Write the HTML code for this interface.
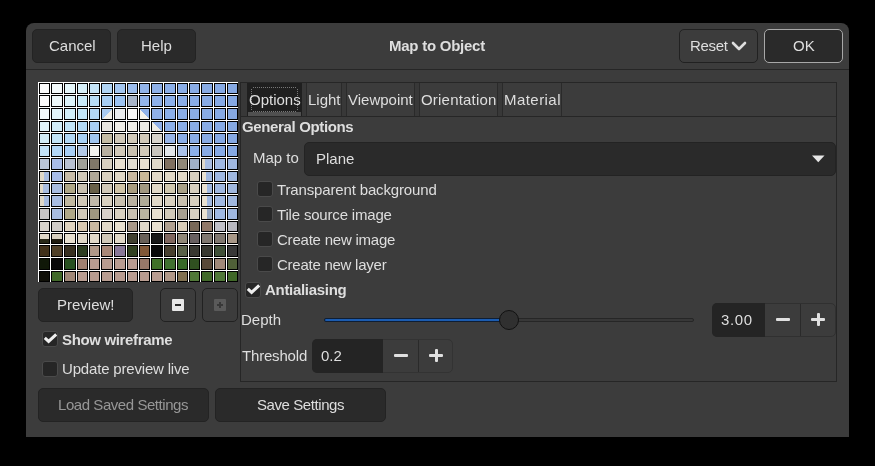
<!DOCTYPE html>
<html><head><meta charset="utf-8">
<style>
*{margin:0;padding:0;box-sizing:border-box}
html,body{width:875px;height:466px;background:#000;overflow:hidden}
body{position:relative;font-family:"Liberation Sans",sans-serif;font-size:15px;color:#dedede}
.a{position:absolute}
.dlg{position:absolute;left:26px;top:23px;width:823px;height:414px;background:#3c3c3c;border-radius:8px 8px 0 0}
.btn{position:absolute;background:#2a2a2a;border:1px solid #232323;border-radius:5px}
.flat{position:absolute;background:#3c3c3c;border:1px solid #212121;border-radius:5px}
.t{position:absolute;white-space:nowrap;line-height:17px;will-change:transform}
.b{font-weight:bold}
#grid{position:absolute;left:38px;top:82px;width:200px;height:200px;background:#fff}
#grid i{position:absolute;border:1px solid #000;display:block}
.cb{position:absolute;width:16px;height:16px;background:#262626;border:1px solid #4a4a4a;border-radius:3px}
.sep{position:absolute;background:#262626}
</style></head><body>
<div class="dlg"></div>
<!-- header -->
<div class="btn" style="left:32px;top:29px;width:79px;height:34px"></div>
<div class="t" style="left:49px;top:37px">Cancel</div>
<div class="btn" style="left:117px;top:29px;width:79px;height:34px"></div>
<div class="t" style="left:141px;top:37px">Help</div>
<div class="t b" style="left:389px;top:37px;letter-spacing:-0.25px">Map to Object</div>
<div class="flat" style="left:679px;top:29px;width:79px;height:34px"></div>
<div class="t" style="left:690px;top:37px;letter-spacing:-0.3px">Reset</div>
<svg class="a" style="left:731px;top:41px" width="16" height="10" viewBox="0 0 16 10"><path d="M2 2 L8 8 L14 2" fill="none" stroke="#dedede" stroke-width="2.6" stroke-linecap="round" stroke-linejoin="round"/></svg>
<div class="btn" style="left:764px;top:29px;width:79px;height:34px;border-color:#a8a8a8"></div>
<div class="t" style="left:793px;top:37px">OK</div>
<div class="sep" style="left:26px;top:69px;width:823px;height:1px"></div>
<!-- grid -->
<div id="grid">
<i style="left:1px;top:1px;width:11px;height:11px;background:#fcfcfc"></i>
<i style="left:13px;top:1px;width:12px;height:11px;background:#f4fbfc"></i>
<i style="left:26px;top:1px;width:12px;height:11px;background:#e6f7fb"></i>
<i style="left:39px;top:1px;width:11px;height:11px;background:#d6eff9"></i>
<i style="left:51px;top:1px;width:11px;height:11px;background:#c4e4f8"></i>
<i style="left:63px;top:1px;width:12px;height:11px;background:#b0d4f4"></i>
<i style="left:76px;top:1px;width:12px;height:11px;background:#a4c6f0"></i>
<i style="left:89px;top:1px;width:11px;height:11px;background:#9cbcec"></i>
<i style="left:101px;top:1px;width:11px;height:11px;background:#92b4ea"></i>
<i style="left:113px;top:1px;width:12px;height:11px;background:#8eb0e8"></i>
<i style="left:126px;top:1px;width:12px;height:11px;background:#8cafe8"></i>
<i style="left:139px;top:1px;width:11px;height:11px;background:#8aade7"></i>
<i style="left:151px;top:1px;width:11px;height:11px;background:#89ace6"></i>
<i style="left:163px;top:1px;width:12px;height:11px;background:#88abe5"></i>
<i style="left:176px;top:1px;width:12px;height:11px;background:#87aae4"></i>
<i style="left:189px;top:1px;width:11px;height:11px;background:#86a9e3"></i>
<i style="left:1px;top:13px;width:11px;height:12px;background:#fcfcfc"></i>
<i style="left:13px;top:13px;width:12px;height:12px;background:#eef9fb"></i>
<i style="left:26px;top:13px;width:12px;height:12px;background:#ddf3fa"></i>
<i style="left:39px;top:13px;width:11px;height:12px;background:#c8e9f8"></i>
<i style="left:51px;top:13px;width:11px;height:12px;background:#b6dcf6"></i>
<i style="left:63px;top:13px;width:12px;height:12px;background:#a8cef3"></i>
<i style="left:76px;top:13px;width:12px;height:12px;background:#9cc2f0"></i>
<i style="left:89px;top:13px;width:11px;height:12px;background:#a8b4c8"></i>
<i style="left:101px;top:13px;width:11px;height:12px;background:#92b4ea"></i>
<i style="left:113px;top:13px;width:12px;height:12px;background:#8eb0e8"></i>
<i style="left:126px;top:13px;width:12px;height:12px;background:#8cafe8"></i>
<i style="left:139px;top:13px;width:11px;height:12px;background:#8aade7"></i>
<i style="left:151px;top:13px;width:11px;height:12px;background:#89ace6"></i>
<i style="left:163px;top:13px;width:12px;height:12px;background:#88abe5"></i>
<i style="left:176px;top:13px;width:12px;height:12px;background:#87aae4"></i>
<i style="left:189px;top:13px;width:11px;height:12px;background:#86a9e3"></i>
<i style="left:1px;top:26px;width:11px;height:12px;background:#f2fafc"></i>
<i style="left:13px;top:26px;width:12px;height:12px;background:#e2f5fb"></i>
<i style="left:26px;top:26px;width:12px;height:12px;background:#d2eef9"></i>
<i style="left:39px;top:26px;width:11px;height:12px;background:#c2e5f8"></i>
<i style="left:51px;top:26px;width:11px;height:12px;background:#b2d8f6"></i>
<i style="left:63px;top:26px;width:12px;height:12px;background:linear-gradient(-45deg,#eeece6 50%,#a8caf0 50%)"></i>
<i style="left:76px;top:26px;width:12px;height:12px;background:#eaecee"></i>
<i style="left:89px;top:26px;width:11px;height:12px;background:#fafafa"></i>
<i style="left:101px;top:26px;width:11px;height:12px;background:linear-gradient(45deg,#f4f2ec 50%,#90b2ea 50%)"></i>
<i style="left:113px;top:26px;width:12px;height:12px;background:#90b0e8"></i>
<i style="left:126px;top:26px;width:12px;height:12px;background:#8cafe8"></i>
<i style="left:139px;top:26px;width:11px;height:12px;background:#8aade7"></i>
<i style="left:151px;top:26px;width:11px;height:12px;background:#89ace6"></i>
<i style="left:163px;top:26px;width:12px;height:12px;background:#88abe5"></i>
<i style="left:176px;top:26px;width:12px;height:12px;background:#87aae4"></i>
<i style="left:189px;top:26px;width:11px;height:12px;background:#86a9e3"></i>
<i style="left:1px;top:39px;width:11px;height:11px;background:#e2f5fb"></i>
<i style="left:13px;top:39px;width:12px;height:11px;background:#d2edf9"></i>
<i style="left:26px;top:39px;width:12px;height:11px;background:#c2e4f8"></i>
<i style="left:39px;top:39px;width:11px;height:11px;background:#b2d9f6"></i>
<i style="left:51px;top:39px;width:11px;height:11px;background:#a8cef4"></i>
<i style="left:63px;top:39px;width:12px;height:11px;background:#e8e6e0"></i>
<i style="left:76px;top:39px;width:12px;height:11px;background:#f0eee8"></i>
<i style="left:89px;top:39px;width:11px;height:11px;background:#f0eee8"></i>
<i style="left:101px;top:39px;width:11px;height:11px;background:#ecebe6"></i>
<i style="left:113px;top:39px;width:12px;height:11px;background:linear-gradient(45deg,#eeece6 50%,#90b0e8 50%)"></i>
<i style="left:126px;top:39px;width:12px;height:11px;background:#8cafe8"></i>
<i style="left:139px;top:39px;width:11px;height:11px;background:#8aade7"></i>
<i style="left:151px;top:39px;width:11px;height:11px;background:#89ace6"></i>
<i style="left:163px;top:39px;width:12px;height:11px;background:#88abe5"></i>
<i style="left:176px;top:39px;width:12px;height:11px;background:#87aae4"></i>
<i style="left:189px;top:39px;width:11px;height:11px;background:#86a9e3"></i>
<i style="left:1px;top:51px;width:11px;height:11px;background:#d2edf8"></i>
<i style="left:13px;top:51px;width:12px;height:11px;background:#c2e4f7"></i>
<i style="left:26px;top:51px;width:12px;height:11px;background:#b2d8f6"></i>
<i style="left:39px;top:51px;width:11px;height:11px;background:#a8d0f4"></i>
<i style="left:51px;top:51px;width:11px;height:11px;background:#a0c6f0"></i>
<i style="left:63px;top:51px;width:12px;height:11px;background:#c4bca4"></i>
<i style="left:76px;top:51px;width:12px;height:11px;background:#d0c8b8"></i>
<i style="left:89px;top:51px;width:11px;height:11px;background:#d0c8b8"></i>
<i style="left:101px;top:51px;width:11px;height:11px;background:#d0c8b8"></i>
<i style="left:113px;top:51px;width:12px;height:11px;background:#d8d4cc"></i>
<i style="left:126px;top:51px;width:12px;height:11px;background:#98b6ea"></i>
<i style="left:139px;top:51px;width:11px;height:11px;background:#8aade7"></i>
<i style="left:151px;top:51px;width:11px;height:11px;background:#89ace6"></i>
<i style="left:163px;top:51px;width:12px;height:11px;background:#88abe5"></i>
<i style="left:176px;top:51px;width:12px;height:11px;background:#87aae4"></i>
<i style="left:189px;top:51px;width:11px;height:11px;background:#86a9e3"></i>
<i style="left:1px;top:63px;width:11px;height:12px;background:#c2e2f8"></i>
<i style="left:13px;top:63px;width:12px;height:12px;background:#b2d6f6"></i>
<i style="left:26px;top:63px;width:12px;height:12px;background:#a8cef4"></i>
<i style="left:39px;top:63px;width:11px;height:12px;background:#b2c8e6"></i>
<i style="left:51px;top:63px;width:11px;height:12px;background:#f2f2ee"></i>
<i style="left:63px;top:63px;width:12px;height:12px;background:#b8b0a0"></i>
<i style="left:76px;top:63px;width:12px;height:12px;background:#d0c8b8"></i>
<i style="left:89px;top:63px;width:11px;height:12px;background:#c8c0b0"></i>
<i style="left:101px;top:63px;width:11px;height:12px;background:#d0c8b8"></i>
<i style="left:113px;top:63px;width:12px;height:12px;background:#c8c4bc"></i>
<i style="left:126px;top:63px;width:12px;height:12px;background:#e0e4e8"></i>
<i style="left:139px;top:63px;width:11px;height:12px;background:#a8c0e8"></i>
<i style="left:151px;top:63px;width:11px;height:12px;background:#8cafe8"></i>
<i style="left:163px;top:63px;width:12px;height:12px;background:#88abe5"></i>
<i style="left:176px;top:63px;width:12px;height:12px;background:#87aae4"></i>
<i style="left:189px;top:63px;width:11px;height:12px;background:#86a9e3"></i>
<i style="left:1px;top:76px;width:11px;height:12px;background:#b8c4d8"></i>
<i style="left:13px;top:76px;width:12px;height:12px;background:#a8bce8"></i>
<i style="left:26px;top:76px;width:12px;height:12px;background:#b8c0d0"></i>
<i style="left:39px;top:76px;width:11px;height:12px;background:#a0a098"></i>
<i style="left:51px;top:76px;width:11px;height:12px;background:#807868"></i>
<i style="left:63px;top:76px;width:12px;height:12px;background:#d8d0c0"></i>
<i style="left:76px;top:76px;width:12px;height:12px;background:#e8e0d0"></i>
<i style="left:89px;top:76px;width:11px;height:12px;background:#e0dcd0"></i>
<i style="left:101px;top:76px;width:11px;height:12px;background:#e8e0d0"></i>
<i style="left:113px;top:76px;width:12px;height:12px;background:#e0d8c8"></i>
<i style="left:126px;top:76px;width:12px;height:12px;background:#807060"></i>
<i style="left:139px;top:76px;width:11px;height:12px;background:#908878"></i>
<i style="left:151px;top:76px;width:11px;height:12px;background:#a0b0c8"></i>
<i style="left:163px;top:76px;width:12px;height:12px;background:linear-gradient(90deg,#e0d8c8 25%,#a8bce0 25%)"></i>
<i style="left:176px;top:76px;width:12px;height:12px;background:#a0b8e0"></i>
<i style="left:189px;top:76px;width:11px;height:12px;background:#a0b8e0"></i>
<i style="left:1px;top:89px;width:11px;height:11px;background:linear-gradient(90deg,#e0d8c8 40%,#a8bce0 40%)"></i>
<i style="left:13px;top:89px;width:12px;height:11px;background:#a8bce8"></i>
<i style="left:26px;top:89px;width:12px;height:11px;background:#c8bca8"></i>
<i style="left:39px;top:89px;width:11px;height:11px;background:#d0c8b8"></i>
<i style="left:51px;top:89px;width:11px;height:11px;background:#b0a898"></i>
<i style="left:63px;top:89px;width:12px;height:11px;background:#d8d0c0"></i>
<i style="left:76px;top:89px;width:12px;height:11px;background:#e0d8c8"></i>
<i style="left:89px;top:89px;width:11px;height:11px;background:#c8b8a0"></i>
<i style="left:101px;top:89px;width:11px;height:11px;background:#c8b898"></i>
<i style="left:113px;top:89px;width:12px;height:11px;background:#e0d8c8"></i>
<i style="left:126px;top:89px;width:12px;height:11px;background:#e0d8c8"></i>
<i style="left:139px;top:89px;width:11px;height:11px;background:#e0d8c8"></i>
<i style="left:151px;top:89px;width:11px;height:11px;background:#d8d0c0"></i>
<i style="left:163px;top:89px;width:12px;height:11px;background:linear-gradient(90deg,#e8e0d0 35%,#a0b8e0 35%)"></i>
<i style="left:176px;top:89px;width:12px;height:11px;background:#a0b8e0"></i>
<i style="left:189px;top:89px;width:11px;height:11px;background:#a0b8e0"></i>
<i style="left:1px;top:101px;width:11px;height:11px;background:linear-gradient(90deg,#e0d8c8 35%,#a8bce0 35%)"></i>
<i style="left:13px;top:101px;width:12px;height:11px;background:#a8bce0"></i>
<i style="left:26px;top:101px;width:12px;height:11px;background:#b0a888"></i>
<i style="left:39px;top:101px;width:11px;height:11px;background:#c8c0b0"></i>
<i style="left:51px;top:101px;width:11px;height:11px;background:#686048"></i>
<i style="left:63px;top:101px;width:12px;height:11px;background:#d0c8b8"></i>
<i style="left:76px;top:101px;width:12px;height:11px;background:#d0c4a8"></i>
<i style="left:89px;top:101px;width:11px;height:11px;background:#a89c80"></i>
<i style="left:101px;top:101px;width:11px;height:11px;background:#a09880"></i>
<i style="left:113px;top:101px;width:12px;height:11px;background:#e0d8c8"></i>
<i style="left:126px;top:101px;width:12px;height:11px;background:#d0c8b0"></i>
<i style="left:139px;top:101px;width:11px;height:11px;background:#a8a088"></i>
<i style="left:151px;top:101px;width:11px;height:11px;background:#d8d0c0"></i>
<i style="left:163px;top:101px;width:12px;height:11px;background:linear-gradient(90deg,#e8e0d0 45%,#a0b8e0 45%)"></i>
<i style="left:176px;top:101px;width:12px;height:11px;background:#a0b8e0"></i>
<i style="left:189px;top:101px;width:11px;height:11px;background:#a0b8e0"></i>
<i style="left:1px;top:113px;width:11px;height:12px;background:linear-gradient(90deg,#e0d8c8 40%,#a8bce0 40%)"></i>
<i style="left:13px;top:113px;width:12px;height:12px;background:#a8bce0"></i>
<i style="left:26px;top:113px;width:12px;height:12px;background:#c0b8a0"></i>
<i style="left:39px;top:113px;width:11px;height:12px;background:#d0c8b8"></i>
<i style="left:51px;top:113px;width:11px;height:12px;background:#c0b8a8"></i>
<i style="left:63px;top:113px;width:12px;height:12px;background:#d8d0c0"></i>
<i style="left:76px;top:113px;width:12px;height:12px;background:#c8c0b0"></i>
<i style="left:89px;top:113px;width:11px;height:12px;background:#b8b0a0"></i>
<i style="left:101px;top:113px;width:11px;height:12px;background:#b0ac98"></i>
<i style="left:113px;top:113px;width:12px;height:12px;background:#e0d8c8"></i>
<i style="left:126px;top:113px;width:12px;height:12px;background:#d8d0c0"></i>
<i style="left:139px;top:113px;width:11px;height:12px;background:#c8c0b0"></i>
<i style="left:151px;top:113px;width:11px;height:12px;background:#d8d0c0"></i>
<i style="left:163px;top:113px;width:12px;height:12px;background:linear-gradient(90deg,#e8e0d0 45%,#a0b8e0 45%)"></i>
<i style="left:176px;top:113px;width:12px;height:12px;background:#a0b8e0"></i>
<i style="left:189px;top:113px;width:11px;height:12px;background:#a0b8e0"></i>
<i style="left:1px;top:126px;width:11px;height:12px;background:#c8c4c4"></i>
<i style="left:13px;top:126px;width:12px;height:12px;background:#a8bce0"></i>
<i style="left:26px;top:126px;width:12px;height:12px;background:#b0a888"></i>
<i style="left:39px;top:126px;width:11px;height:12px;background:#d0c8b8"></i>
<i style="left:51px;top:126px;width:11px;height:12px;background:#a09880"></i>
<i style="left:63px;top:126px;width:12px;height:12px;background:#d8d0c8"></i>
<i style="left:76px;top:126px;width:12px;height:12px;background:#d8d0c0"></i>
<i style="left:89px;top:126px;width:11px;height:12px;background:#c8c0b0"></i>
<i style="left:101px;top:126px;width:11px;height:12px;background:#b8b4a0"></i>
<i style="left:113px;top:126px;width:12px;height:12px;background:#e8e0d0"></i>
<i style="left:126px;top:126px;width:12px;height:12px;background:#d0c8b8"></i>
<i style="left:139px;top:126px;width:11px;height:12px;background:#a8a090"></i>
<i style="left:151px;top:126px;width:11px;height:12px;background:#d8d0c0"></i>
<i style="left:163px;top:126px;width:12px;height:12px;background:linear-gradient(90deg,#e8e0d0 45%,#98a8c0 45%)"></i>
<i style="left:176px;top:126px;width:12px;height:12px;background:#a0b8e0"></i>
<i style="left:189px;top:126px;width:11px;height:12px;background:#a0b8e0"></i>
<i style="left:1px;top:139px;width:11px;height:11px;background:#d8d4cc"></i>
<i style="left:13px;top:139px;width:12px;height:11px;background:#d0ccc8"></i>
<i style="left:26px;top:139px;width:12px;height:11px;background:#e0d4c0"></i>
<i style="left:39px;top:139px;width:11px;height:11px;background:#d8c8b0"></i>
<i style="left:51px;top:139px;width:11px;height:11px;background:#c8b8a0"></i>
<i style="left:63px;top:139px;width:12px;height:11px;background:#e0d8c8"></i>
<i style="left:76px;top:139px;width:12px;height:11px;background:#e8e0d0"></i>
<i style="left:89px;top:139px;width:11px;height:11px;background:#a89888"></i>
<i style="left:101px;top:139px;width:11px;height:11px;background:#e0d8c8"></i>
<i style="left:113px;top:139px;width:12px;height:11px;background:#e8e0d0"></i>
<i style="left:126px;top:139px;width:12px;height:11px;background:#b0a090"></i>
<i style="left:139px;top:139px;width:11px;height:11px;background:#d8ccb8"></i>
<i style="left:151px;top:139px;width:11px;height:11px;background:#786858"></i>
<i style="left:163px;top:139px;width:12px;height:11px;background:#907868"></i>
<i style="left:176px;top:139px;width:12px;height:11px;background:#c0c0c8"></i>
<i style="left:189px;top:139px;width:11px;height:11px;background:#b8b8c0"></i>
<i style="left:1px;top:151px;width:11px;height:11px;background:linear-gradient(#e0d8c8 60%,#282818 60%)"></i>
<i style="left:13px;top:151px;width:12px;height:11px;background:linear-gradient(#d8d0c0 60%,#201c10 60%)"></i>
<i style="left:26px;top:151px;width:12px;height:11px;background:#e8e0d0"></i>
<i style="left:39px;top:151px;width:11px;height:11px;background:#e0d8c8"></i>
<i style="left:51px;top:151px;width:11px;height:11px;background:#e0d8c8"></i>
<i style="left:63px;top:151px;width:12px;height:11px;background:#d0c8b8"></i>
<i style="left:76px;top:151px;width:12px;height:11px;background:#e0d8c8"></i>
<i style="left:89px;top:151px;width:11px;height:11px;background:#404030"></i>
<i style="left:101px;top:151px;width:11px;height:11px;background:#686058"></i>
<i style="left:113px;top:151px;width:12px;height:11px;background:#181818"></i>
<i style="left:126px;top:151px;width:12px;height:11px;background:#806860"></i>
<i style="left:139px;top:151px;width:11px;height:11px;background:#908878"></i>
<i style="left:151px;top:151px;width:11px;height:11px;background:#686060"></i>
<i style="left:163px;top:151px;width:12px;height:11px;background:#807870"></i>
<i style="left:176px;top:151px;width:12px;height:11px;background:#807870"></i>
<i style="left:189px;top:151px;width:11px;height:11px;background:#a89888"></i>
<i style="left:1px;top:163px;width:11px;height:12px;background:#40301a"></i>
<i style="left:13px;top:163px;width:12px;height:12px;background:#504028"></i>
<i style="left:26px;top:163px;width:12px;height:12px;background:#383020"></i>
<i style="left:39px;top:163px;width:11px;height:12px;background:#2c3c20"></i>
<i style="left:51px;top:163px;width:11px;height:12px;background:#b09888"></i>
<i style="left:63px;top:163px;width:12px;height:12px;background:#a88878"></i>
<i style="left:76px;top:163px;width:12px;height:12px;background:#887898"></i>
<i style="left:89px;top:163px;width:11px;height:12px;background:#304020"></i>
<i style="left:101px;top:163px;width:11px;height:12px;background:#805838"></i>
<i style="left:113px;top:163px;width:12px;height:12px;background:#080808"></i>
<i style="left:126px;top:163px;width:12px;height:12px;background:#484030"></i>
<i style="left:139px;top:163px;width:11px;height:12px;background:#586048"></i>
<i style="left:151px;top:163px;width:11px;height:12px;background:#383830"></i>
<i style="left:163px;top:163px;width:12px;height:12px;background:#383830"></i>
<i style="left:176px;top:163px;width:12px;height:12px;background:#405038"></i>
<i style="left:189px;top:163px;width:11px;height:12px;background:#383838"></i>
<i style="left:1px;top:176px;width:11px;height:12px;background:#101808"></i>
<i style="left:13px;top:176px;width:12px;height:12px;background:#080808"></i>
<i style="left:26px;top:176px;width:12px;height:12px;background:#285020"></i>
<i style="left:39px;top:176px;width:11px;height:12px;background:#a08070"></i>
<i style="left:51px;top:176px;width:11px;height:12px;background:#b89c90"></i>
<i style="left:63px;top:176px;width:12px;height:12px;background:#b89c90"></i>
<i style="left:76px;top:176px;width:12px;height:12px;background:#b89c90"></i>
<i style="left:89px;top:176px;width:11px;height:12px;background:#b89c90"></i>
<i style="left:101px;top:176px;width:11px;height:12px;background:#987868"></i>
<i style="left:113px;top:176px;width:12px;height:12px;background:#407028"></i>
<i style="left:126px;top:176px;width:12px;height:12px;background:#407030"></i>
<i style="left:139px;top:176px;width:11px;height:12px;background:#386828"></i>
<i style="left:151px;top:176px;width:11px;height:12px;background:#305020"></i>
<i style="left:163px;top:176px;width:12px;height:12px;background:#584838"></i>
<i style="left:176px;top:176px;width:12px;height:12px;background:#a08878"></i>
<i style="left:189px;top:176px;width:11px;height:12px;background:#506038"></i>
<i style="left:1px;top:189px;width:11px;height:11px;background:#101008"></i>
<i style="left:13px;top:189px;width:12px;height:11px;background:#406828"></i>
<i style="left:26px;top:189px;width:12px;height:11px;background:#a08878"></i>
<i style="left:39px;top:189px;width:11px;height:11px;background:#b89c90"></i>
<i style="left:51px;top:189px;width:11px;height:11px;background:#b89c90"></i>
<i style="left:63px;top:189px;width:12px;height:11px;background:#b89c90"></i>
<i style="left:76px;top:189px;width:12px;height:11px;background:#b89c90"></i>
<i style="left:89px;top:189px;width:11px;height:11px;background:#b89c90"></i>
<i style="left:101px;top:189px;width:11px;height:11px;background:#b89c90"></i>
<i style="left:113px;top:189px;width:12px;height:11px;background:#b89c90"></i>
<i style="left:126px;top:189px;width:12px;height:11px;background:#b09888"></i>
<i style="left:139px;top:189px;width:11px;height:11px;background:#807050"></i>
<i style="left:151px;top:189px;width:11px;height:11px;background:#507838"></i>
<i style="left:163px;top:189px;width:12px;height:11px;background:#406828"></i>
<i style="left:176px;top:189px;width:12px;height:11px;background:#507838"></i>
<i style="left:189px;top:189px;width:11px;height:11px;background:#406828"></i></div>
<div class="btn" style="left:38px;top:288px;width:95px;height:34px"></div>
<div class="t" style="left:57px;top:296px">Preview!</div>
<div class="flat" style="left:160px;top:288px;width:36px;height:34px"></div>
<div class="a" style="left:172px;top:299px;width:12px;height:12px;background:#e8e8e8;border-radius:1px"></div>
<div class="a" style="left:175px;top:304px;width:6px;height:2px;background:#2a2a2a"></div>
<div class="flat" style="left:202px;top:288px;width:36px;height:34px"></div>
<div class="a" style="left:214px;top:299px;width:12px;height:12px;background:#5a5a5a;border-radius:1px"></div>
<div class="a" style="left:217px;top:304px;width:6px;height:2px;background:#383838"></div>
<div class="a" style="left:219px;top:302px;width:2px;height:6px;background:#383838"></div>

<div class="cb" style="left:42px;top:331px"></div>
<svg class="a" style="left:42px;top:331px" width="15" height="15" viewBox="0 0 15 15"><path d="M2.8 6.9 L6.6 10.4 L14.2 3.4" fill="none" stroke="#eeeeee" stroke-width="3" stroke-linecap="butt" stroke-linejoin="miter"/></svg>
<div class="t b" style="left:62px;top:331px;letter-spacing:-0.35px">Show wireframe</div>
<div class="cb" style="left:42px;top:361px"></div>
<div class="t" style="left:62px;top:360px;letter-spacing:-0.18px">Update preview live</div>

<div class="btn" style="left:38px;top:388px;width:171px;height:34px"></div>
<div class="t" style="left:58px;top:396px;color:#979797;letter-spacing:-0.44px">Load Saved Settings</div>
<div class="btn" style="left:215px;top:388px;width:171px;height:34px"></div>
<div class="t" style="left:257px;top:396px;letter-spacing:-0.42px">Save Settings</div>

<!-- notebook frame -->
<div class="a" style="left:240px;top:82px;width:597px;height:300px;border:1px solid #262626"></div>
<div class="a" style="left:241px;top:83px;width:595px;height:33px;background:#383838"></div>
<div class="sep" style="left:241px;top:116px;width:595px;height:1px"></div>
<!-- tabs -->
<div class="a" style="left:247px;top:83px;width:55px;height:33px;background:#1f1f1f"></div>
<div class="a" style="left:248px;top:112px;width:53px;height:4px;background:#505050"></div>
<div class="a" style="left:253px;top:87px;width:43px;height:1px;background:repeating-linear-gradient(90deg,#787878 0 1px,transparent 1px 2px)"></div><div class="a" style="left:253px;top:111px;width:43px;height:1px;background:repeating-linear-gradient(90deg,#787878 0 1px,transparent 1px 2px)"></div><div class="a" style="left:251px;top:89px;width:1px;height:21px;background:repeating-linear-gradient(180deg,#787878 0 1px,transparent 1px 2px)"></div><div class="a" style="left:297px;top:89px;width:1px;height:21px;background:repeating-linear-gradient(180deg,#787878 0 1px,transparent 1px 2px)"></div>
<div class="t" style="left:249px;top:91px">Options</div>
<div class="a" style="left:306px;top:83px;width:36px;height:33px;background:#3c3c3c;border-left:1px solid #2a2a2a;border-right:1px solid #2a2a2a"></div>
<div class="t" style="left:308px;top:91px">Light</div>
<div class="a" style="left:346px;top:83px;width:69px;height:33px;background:#3c3c3c;border-left:1px solid #2a2a2a;border-right:1px solid #2a2a2a"></div>
<div class="t" style="left:348px;top:91px">Viewpoint</div>
<div class="a" style="left:419px;top:83px;width:79px;height:33px;background:#3c3c3c;border-left:1px solid #2a2a2a;border-right:1px solid #2a2a2a"></div>
<div class="t" style="left:421px;top:91px;letter-spacing:0.2px">Orientation</div>
<div class="a" style="left:502px;top:83px;width:60px;height:33px;background:#3c3c3c;border-left:1px solid #2a2a2a;border-right:1px solid #2a2a2a"></div>
<div class="t" style="left:504px;top:91px;letter-spacing:0.45px">Material</div>
<div class="a" style="left:562px;top:83px;width:274px;height:33px;background:#3c3c3c"></div>

<div class="t b" style="left:242px;top:118px;letter-spacing:-0.36px">General Options</div>
<div class="t" style="left:253px;top:149px">Map to</div>
<div class="btn" style="left:304px;top:142px;width:532px;height:34px"></div>
<div class="t" style="left:316px;top:150px">Plane</div>
<svg class="a" style="left:812px;top:155px" width="13" height="8" viewBox="0 0 13 8"><path d="M0 0.5 L12.5 0.5 L6.25 7.2 Z" fill="#e6e6e6"/></svg>

<div class="cb" style="left:257px;top:181px"></div>
<div class="t" style="left:277px;top:181px;letter-spacing:-0.15px">Transparent background</div>
<div class="cb" style="left:257px;top:206px"></div>
<div class="t" style="left:277px;top:206px;letter-spacing:-0.18px">Tile source image</div>
<div class="cb" style="left:257px;top:231px"></div>
<div class="t" style="left:277px;top:231px;letter-spacing:-0.22px">Create new image</div>
<div class="cb" style="left:257px;top:256px"></div>
<div class="t" style="left:277px;top:256px;letter-spacing:-0.25px">Create new layer</div>
<div class="cb" style="left:245px;top:282px"></div>
<svg class="a" style="left:245px;top:282px" width="15" height="15" viewBox="0 0 15 15"><path d="M2.8 6.9 L6.6 10.4 L14.2 3.4" fill="none" stroke="#eeeeee" stroke-width="3" stroke-linecap="butt" stroke-linejoin="miter"/></svg>
<div class="t b" style="left:265px;top:281px;letter-spacing:-0.3px">Antialiasing</div>

<div class="t" style="left:241px;top:311px">Depth</div>
<div class="a" style="left:324px;top:318px;width:370px;height:4px;background:#383838;border:1px solid #262626;border-radius:2px"></div>
<div class="a" style="left:324px;top:318px;width:184px;height:4px;background:#1c5cb0;border:1px solid #0e1e34;border-radius:2px"></div>
<div class="a" style="left:499px;top:310px;width:20px;height:20px;background:#303030;border:1.5px solid #111;border-radius:50%"></div>

<div class="a" style="left:712px;top:303px;width:124px;height:34px;border:1px solid #303030;border-radius:5px;background:#3c3c3c"></div>
<div class="a" style="left:712px;top:303px;width:53px;height:34px;background:#242424;border-radius:5px 0 0 5px"></div>
<div class="a" style="left:800px;top:304px;width:1px;height:32px;background:#2a2a2a"></div>
<div class="t" style="left:721px;top:311px;letter-spacing:0.6px">3.00</div>
<div class="a" style="left:776px;top:318px;width:14px;height:3px;background:#e0e0e0;border-radius:1px"></div>
<div class="a" style="left:811px;top:318px;width:14px;height:3px;background:#e0e0e0;border-radius:1px"></div>
<div class="a" style="left:816.5px;top:313px;width:3px;height:13px;background:#e0e0e0;border-radius:1px"></div>

<div class="t" style="left:242px;top:347px;letter-spacing:-0.18px">Threshold</div>
<div class="a" style="left:312px;top:339px;width:141px;height:34px;border:1px solid #333;border-radius:5px;background:#3c3c3c"></div>
<div class="a" style="left:312px;top:339px;width:71px;height:34px;background:#242424;border-radius:5px 0 0 5px"></div>
<div class="a" style="left:418px;top:340px;width:1px;height:32px;background:#2a2a2a"></div>
<div class="t" style="left:321px;top:347px">0.2</div>
<div class="a" style="left:394px;top:354px;width:14px;height:3px;background:#e0e0e0;border-radius:1px"></div>
<div class="a" style="left:429px;top:354px;width:14px;height:3px;background:#e0e0e0;border-radius:1px"></div>
<div class="a" style="left:434.5px;top:349px;width:3px;height:13px;background:#e0e0e0;border-radius:1px"></div>
</body></html>
